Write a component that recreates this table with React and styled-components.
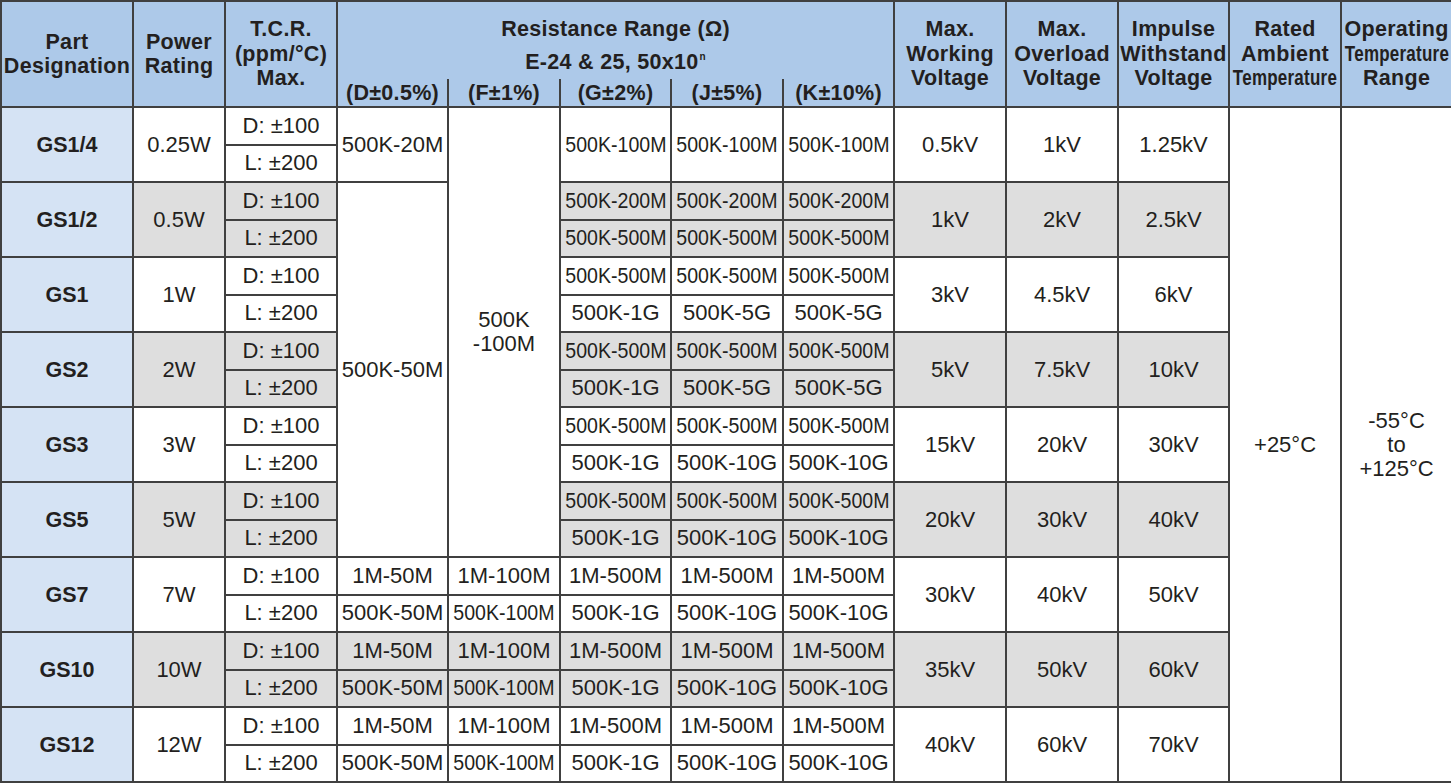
import React from "react";
import styled, { createGlobalStyle } from "styled-components";

const GlobalStyle = createGlobalStyle`
	body {
		margin: 0;
		background: #ffffff;
		font-family: "Liberation Sans", Arial, sans-serif;
		color: #231f20;
	}
`;

const LINE = "#404040";
const BLUE = "#adc9e9";
const PALE = "#d5e3f4";
const GRAY = "#dedede";

const Table = styled.table`
	width: 1451px;
	table-layout: fixed;
	border-collapse: collapse;
	border: 2px solid ${LINE};
	font-family: "Liberation Sans", Arial, sans-serif;
	color: #231f20;
`;

const Row = styled.tr`
	height: ${(p) => p.$h}px;
`;

const Head = styled.th`
	background: ${BLUE};
	border: 2px solid ${LINE};
	font-size: 21.5px;
	font-weight: bold;
	letter-spacing: 0.3px;
	line-height: 24.5px;
	text-align: center;
	vertical-align: middle;
	padding: 0;
	white-space: nowrap;
`;

const RangeHead = styled(Head)`
	border-bottom: none;
	vertical-align: top;
	padding-top: 11px;
	line-height: 33px;
`;

const SubHead = styled(Head)`
	border-top: none;
	line-height: 26px;
	vertical-align: middle;
`;

const Cell = styled.td`
	background: ${(p) => (p.$shade ? GRAY : "#ffffff")};
	border: 2px solid ${LINE};
	font-size: 22px;
	line-height: 24px;
	text-align: center;
	vertical-align: middle;
	padding: 0;
	white-space: nowrap;
`;

const PartCell = styled(Cell)`
	background: ${PALE};
	font-weight: bold;
	font-size: 21.5px;
`;

const Squeeze = styled.span`
	display: inline-block;
	transform: scaleX(${(p) => p.$s});
	margin: 0 ${(p) => p.$m}px;
`;

const Sup = styled.sup`
	font-size: 10px;
	vertical-align: 9px;
	line-height: 0;
	margin-left: 1px;
`;

const widths = [132, 92, 112, 111, 112, 111, 112, 111, 112, 112, 111, 112, 111];

// nine-character ranges are set condensed so they fit their column
const fit = (t) =>
	t.length >= 9 ? (
		<Squeeze $s={0.89} $m={-6.3}>
			{t}
		</Squeeze>
	) : (
		t
	);

const wide = ["1M-50M", "1M-100M", "1M-500M", "1M-500M", "1M-500M"];
const wideL = ["500K-50M", "500K-100M", "500K-1G", "500K-10G", "500K-10G"];
const tri = (t) => [t, t, t];

const groups = [
	{
		name: "GS1/4",
		power: "0.25W",
		shade: false,
		d: [
			{ t: "500K-20M", rs: 2, white: true },
			{ t: ["500K", "-100M"], rs: 12, white: true },
			...tri("500K-100M").map((t) => ({ t, rs: 2 })),
		],
		l: [],
		volt: ["0.5kV", "1kV", "1.25kV"],
	},
	{
		name: "GS1/2",
		power: "0.5W",
		shade: true,
		d: [{ t: "500K-50M", rs: 10, white: true }, ...tri("500K-200M").map((t) => ({ t }))],
		l: tri("500K-500M"),
		volt: ["1kV", "2kV", "2.5kV"],
	},
	{
		name: "GS1",
		power: "1W",
		shade: false,
		d: tri("500K-500M"),
		l: ["500K-1G", "500K-5G", "500K-5G"],
		volt: ["3kV", "4.5kV", "6kV"],
	},
	{
		name: "GS2",
		power: "2W",
		shade: true,
		d: tri("500K-500M"),
		l: ["500K-1G", "500K-5G", "500K-5G"],
		volt: ["5kV", "7.5kV", "10kV"],
	},
	{
		name: "GS3",
		power: "3W",
		shade: false,
		d: tri("500K-500M"),
		l: ["500K-1G", "500K-10G", "500K-10G"],
		volt: ["15kV", "20kV", "30kV"],
	},
	{
		name: "GS5",
		power: "5W",
		shade: true,
		d: tri("500K-500M"),
		l: ["500K-1G", "500K-10G", "500K-10G"],
		volt: ["20kV", "30kV", "40kV"],
	},
	{ name: "GS7", power: "7W", shade: false, d: wide, l: wideL, volt: ["30kV", "40kV", "50kV"] },
	{ name: "GS10", power: "10W", shade: true, d: wide, l: wideL, volt: ["35kV", "50kV", "60kV"] },
	{ name: "GS12", power: "12W", shade: false, d: wide, l: wideL, volt: ["40kV", "60kV", "70kV"] },
];

const norm = (c) => (typeof c === "string" ? { t: c } : c);

const resCells = (list, shade, key) =>
	list.map(norm).map((c, i) => (
		<Cell key={key + i} rowSpan={c.rs || 1} $shade={shade && !c.white}>
			{Array.isArray(c.t) ? c.t.map((line) => <div key={line}>{line}</div>) : fit(c.t)}
		</Cell>
	));

const App = () => {
	return (
		<>
			<GlobalStyle />
			<Table>
				<colgroup>
					{widths.map((w, i) => (
						<col key={i} style={{ width: w }} />
					))}
				</colgroup>
				<thead>
					<Row $h={78}>
						<Head rowSpan={2}>
							Part
							<br />
							Designation
						</Head>
						<Head rowSpan={2}>
							Power
							<br />
							Rating
						</Head>
						<Head rowSpan={2}>
							T.C.R.
							<br />
							(ppm/°C)
							<br />
							Max.
						</Head>
						<RangeHead colSpan={5}>
							Resistance Range (Ω)
							<br />
							E-24 &amp; 25, 50x10<Sup>n</Sup>
						</RangeHead>
						<Head rowSpan={2}>
							Max.
							<br />
							Working
							<br />
							Voltage
						</Head>
						<Head rowSpan={2}>
							Max.
							<br />
							Overload
							<br />
							Voltage
						</Head>
						<Head rowSpan={2}>
							Impulse
							<br />
							Withstand
							<br />
							Voltage
						</Head>
						<Head rowSpan={2}>
							Rated
							<br />
							Ambient
							<br />
							<Squeeze $s={0.79} $m={-13.5}>
								Temperature
							</Squeeze>
						</Head>
						<Head rowSpan={2}>
							Operating
							<br />
							<Squeeze $s={0.79} $m={-13.5}>
								Temperature
							</Squeeze>
							<br />
							Range
						</Head>
					</Row>
					<Row $h={28}>
						<SubHead>(D±0.5%)</SubHead>
						<SubHead>(F±1%)</SubHead>
						<SubHead>(G±2%)</SubHead>
						<SubHead>(J±5%)</SubHead>
						<SubHead>(K±10%)</SubHead>
					</Row>
				</thead>
				<tbody>
					{groups.map((g, gi) => (
						<React.Fragment key={g.name}>
							<Row $h={37.5}>
								<PartCell rowSpan={2}>{g.name}</PartCell>
								<Cell rowSpan={2} $shade={g.shade}>
									{g.power}
								</Cell>
								<Cell $shade={g.shade}>D: ±100</Cell>
								{resCells(g.d, g.shade, "d")}
								{g.volt.map((v, i) => (
									<Cell key={"v" + i} rowSpan={2} $shade={g.shade}>
										{v}
									</Cell>
								))}
								{gi === 0 && (
									<>
										<Cell rowSpan={18}>+25°C</Cell>
										<Cell rowSpan={18}>
											-55°C
											<br />
											to
											<br />
											+125°C
										</Cell>
									</>
								)}
							</Row>
							<Row $h={37.5}>
								<Cell $shade={g.shade}>L: ±200</Cell>
								{resCells(g.l, g.shade, "l")}
							</Row>
						</React.Fragment>
					))}
				</tbody>
			</Table>
		</>
	);
};

export default App;
